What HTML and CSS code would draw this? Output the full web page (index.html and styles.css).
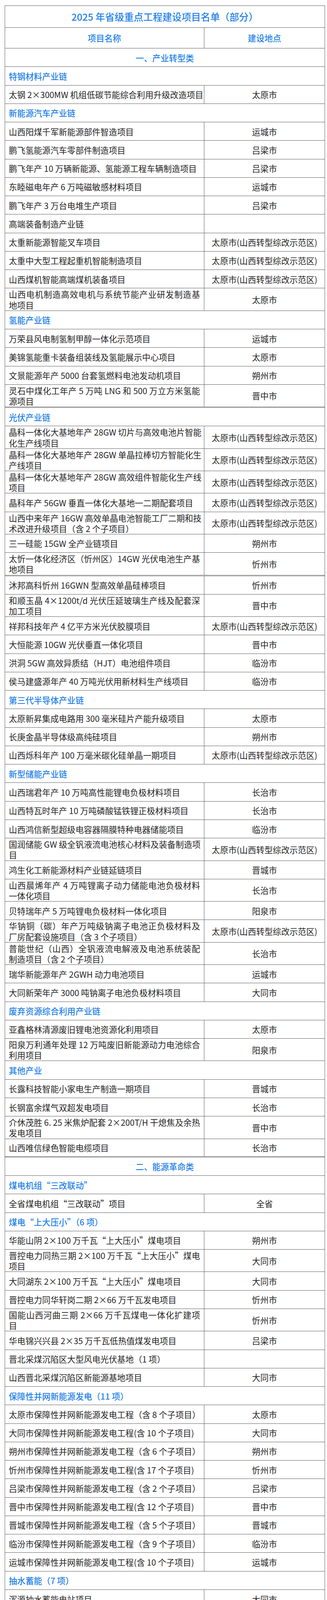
FILE: index.html
```html
<!DOCTYPE html>
<html lang="zh-CN">
<head>
<meta charset="utf-8">
<title>2025 年省级重点工程建设项目名单（部分）</title>
<link rel="stylesheet" href="styles.css">
</head>
<body>
<div class="page">
<div class="tbl">
<div class="row title"><div class="full">2025 年省级重点工程建设项目名单（部分）</div></div>
<div class="row head"><div class="nm">项目名称</div><div class="lc">建设地点</div></div>

<div class="row sec"><div class="full">一、产业转型类</div></div>
<div class="row sub"><div class="full">特钢材料产业链</div></div>
<div class="row"><div class="nm">太钢 2×300MW 机组低碳节能综合利用升级改造项目</div><div class="lc">太原市</div></div>
<div class="row sub"><div class="full">新能源汽车产业链</div></div>
<div class="row"><div class="nm">山西阳煤千军新能源部件智造项目</div><div class="lc">运城市</div></div>
<div class="row"><div class="nm">鹏飞氢能源汽车零部件制造项目</div><div class="lc">吕梁市</div></div>
<div class="row"><div class="nm">鹏飞年产 10 万辆新能源、氢能源工程车辆制造项目</div><div class="lc">吕梁市</div></div>
<div class="row"><div class="nm">东睦磁电年产 6 万吨磁敏感材料项目</div><div class="lc">运城市</div></div>
<div class="row"><div class="nm">鹏飞年产 3 万台电堆生产项目</div><div class="lc">吕梁市</div></div>
<div class="row"><div class="nm">高端装备制造产业链</div><div class="lc"></div></div>
<div class="row"><div class="nm">太重新能源智能叉车项目</div><div class="lc">太原市(山西转型综改示范区)</div></div>
<div class="row"><div class="nm">太重中大型工程起重机智能制造项目</div><div class="lc">太原市(山西转型综改示范区)</div></div>
<div class="row"><div class="nm">山西煤机智能高端煤机装备项目</div><div class="lc">太原市(山西转型综改示范区)</div></div>
<div class="row"><div class="nm"><p><span class="jl">山西电机制造高效电机与系统节能产业研发制造基</span>地项目</p></div><div class="lc">太原市</div></div>
<div class="row sub"><div class="full">氢能产业链</div></div>
<div class="row"><div class="nm">万荣县风电制氢制甲醇一体化示范项目</div><div class="lc">运城市</div></div>
<div class="row"><div class="nm">美锦氢能重卡装备组装线及氢能展示中心项目</div><div class="lc">太原市</div></div>
<div class="row"><div class="nm">文景能源年产 5000 台套氢燃料电池发动机项目</div><div class="lc">朔州市</div></div>
<div class="row dbl"><div class="nm"><p><span class="jl">灵石中煤化工年产 5 万吨 LNG 和 500 万立方米氢能</span>源项目</p></div><div class="lc">晋中市</div></div>
<div class="row sub"><div class="full">光伏产业链</div></div>
<div class="row"><div class="nm"><p><span class="jl">晶科一体化大基地年产 28GW 切片与高效电池片智能</span>化生产线项目</p></div><div class="lc">太原市(山西转型综改示范区)</div></div>
<div class="row"><div class="nm"><p><span class="jl">晶科一体化大基地年产 28GW 单晶拉棒切方智能化生</span>产线项目</p></div><div class="lc">太原市(山西转型综改示范区)</div></div>
<div class="row"><div class="nm"><p><span class="jl">晶科一体化大基地年产 28GW 高效组件智能化生产线</span>项目</p></div><div class="lc">太原市(山西转型综改示范区)</div></div>
<div class="row"><div class="nm">晶科年产 56GW 垂直一体化大基地一二期配套项目</div><div class="lc">太原市(山西转型综改示范区)</div></div>
<div class="row"><div class="nm"><p><span class="jl">山西中来年产 16GW 高效单晶电池智能工厂二期和技</span>术改进升级项目（含 2 个子项目）</p></div><div class="lc">太原市(山西转型综改示范区)</div></div>
<div class="row"><div class="nm">三一硅能 15GW 全产业链项目</div><div class="lc">朔州市</div></div>
<div class="row dbl"><div class="nm"><p><span class="jl">太忻一体化经济区（忻州区）14GW 光伏电池生产基</span>地项目</p></div><div class="lc">忻州市</div></div>
<div class="row"><div class="nm">沐邦高科忻州 16GWN 型高效单晶硅棒项目</div><div class="lc">忻州市</div></div>
<div class="row"><div class="nm"><p><span class="jl">和顺玉晶 4×1200t/d 光伏压延玻璃生产线及配套深</span>加工项目</p></div><div class="lc">晋中市</div></div>
<div class="row"><div class="nm">祥邦科技年产 4 亿平方米光伏胶膜项目</div><div class="lc">太原市(山西转型综改示范区)</div></div>
<div class="row"><div class="nm">大恒能源 10GW 光伏垂直一体化项目</div><div class="lc">晋中市</div></div>
<div class="row"><div class="nm">洪洞 5GW 高效异质结（HJT）电池组件项目</div><div class="lc">临汾市</div></div>
<div class="row"><div class="nm">侯马建盛源年产 40 万吨光伏用新材料生产线项目</div><div class="lc">临汾市</div></div>
<div class="row sub"><div class="full">第三代半导体产业链</div></div>
<div class="row"><div class="nm">太原新昇集成电路用 300 毫米硅片产能升级项目</div><div class="lc">太原市</div></div>
<div class="row"><div class="nm">长庚金晶半导体级高纯硅项目</div><div class="lc">朔州市</div></div>
<div class="row"><div class="nm">山西烁科年产 100 万毫米碳化硅单晶一期项目</div><div class="lc">太原市(山西转型综改示范区)</div></div>
<div class="row sub"><div class="full">新型储能产业链</div></div>
<div class="row"><div class="nm">山西瑞君年产 10 万吨高性能锂电负极材料项目</div><div class="lc">长治市</div></div>
<div class="row"><div class="nm">山西特瓦时年产 10 万吨磷酸锰铁锂正极材料项目</div><div class="lc">长治市</div></div>
<div class="row"><div class="nm">山西鸿信新型超级电容器隔膜特种电器储能项目</div><div class="lc">临汾市</div></div>
<div class="row"><div class="nm"><p><span class="jl">国润储能 GW 级全钒液流电池核心材料及装备制造项</span>目</p></div><div class="lc">太原市(山西转型综改示范区)</div></div>
<div class="row"><div class="nm">鸿生化工新能源材料产业链延链项目</div><div class="lc">晋城市</div></div>
<div class="row"><div class="nm"><p><span class="jl">山西晨烯年产 4 万吨锂离子动力储能电池负极材料</span>一体化项目</p></div><div class="lc">长治市</div></div>
<div class="row"><div class="nm">贝特瑞年产 5 万吨锂电负极材料一体化项目</div><div class="lc">阳泉市</div></div>
<div class="row"><div class="nm"><p><span class="jl">华钠铜（碳）年产万吨级钠离子电池正负极材料及</span>厂房配套设施项目（含 3 个子项目）</p></div><div class="lc">太原市(山西转型综改示范区)</div></div>
<div class="row"><div class="nm"><p><span class="jl">普能世纪（山西）全钒液流电解液及电池系统装配</span>制造项目（含 2 个子项目）</p></div><div class="lc">长治市</div></div>
<div class="row"><div class="nm">瑞华新能源年产 2GWH 动力电池项目</div><div class="lc">运城市</div></div>
<div class="row"><div class="nm">大同新荣年产 3000 吨钠离子电池负极材料项目</div><div class="lc">大同市</div></div>
<div class="row sub"><div class="full">废弃资源综合利用产业链</div></div>
<div class="row"><div class="nm">亚鑫格林清源废旧锂电池资源化利用项目</div><div class="lc">太原市</div></div>
<div class="row"><div class="nm"><p><span class="jl">阳泉万利通年处理 12 万吨废旧新能源动力电池综合</span>利用项目</p></div><div class="lc">阳泉市</div></div>
<div class="row sub"><div class="full">其他产业</div></div>
<div class="row"><div class="nm">长露科技智能小家电生产制造一期项目</div><div class="lc">晋城市</div></div>
<div class="row"><div class="nm">长钢富余煤气双超发电项目</div><div class="lc">长治市</div></div>
<div class="row"><div class="nm"><p><span class="jl">介休茂胜 6. 25 米焦炉配套 2×200T/H 干熄焦及余热</span>发电项目</p></div><div class="lc">晋中市</div></div>
<div class="row dbl"><div class="nm">山西唯信绿色智能电缆项目</div><div class="lc">长治市</div></div>

<div class="row sec"><div class="full">二、能源革命类</div></div>
<div class="row sub"><div class="full">煤电机组“三改联动”</div></div>
<div class="row"><div class="nm">全省煤电机组“三改联动”项目</div><div class="lc">全省</div></div>
<div class="row sub"><div class="full">煤电“上大压小”（6 项）</div></div>
<div class="row"><div class="nm">华能山阴 2×100 万千瓦“上大压小”煤电项目</div><div class="lc">朔州市</div></div>
<div class="row"><div class="nm"><p><span class="jl">晋控电力同热三期 2×100 万千瓦“上大压小”煤电</span>项目</p></div><div class="lc">大同市</div></div>
<div class="row"><div class="nm">大同湖东 2×100 万千瓦“上大压小”煤电项目</div><div class="lc">大同市</div></div>
<div class="row"><div class="nm">晋控电力同华轩岗二期 2×66 万千瓦发电项目</div><div class="lc">忻州市</div></div>
<div class="row"><div class="nm"><p><span class="jl">国能山西河曲三期 2×66 万千瓦煤电一体化扩建项</span>目</p></div><div class="lc">忻州市</div></div>
<div class="row"><div class="nm">华电锦兴兴县 2×35 万千瓦低热值煤发电项目</div><div class="lc">吕梁市</div></div>
<div class="row"><div class="nm">晋北采煤沉陷区大型风电光伏基地（1 项）</div><div class="lc"></div></div>
<div class="row"><div class="nm">山西晋北采煤沉陷区新能源基地项目</div><div class="lc">大同市</div></div>
<div class="row sub"><div class="full">保障性并网新能源发电（11 项）</div></div>
<div class="row"><div class="nm">太原市保障性并网新能源发电工程（含 8 个子项目）</div><div class="lc">太原市</div></div>
<div class="row"><div class="nm">大同市保障性并网新能源发电工程(含 10 个子项目)</div><div class="lc">大同市</div></div>
<div class="row"><div class="nm">朔州市保障性并网新能源发电工程（含 6 个子项目）</div><div class="lc">朔州市</div></div>
<div class="row"><div class="nm">忻州市保障性并网新能源发电工程(含 17 个子项目)</div><div class="lc">忻州市</div></div>
<div class="row"><div class="nm">吕梁市保障性并网新能源发电工程（含 2 个子项目）</div><div class="lc">吕梁市</div></div>
<div class="row"><div class="nm">晋中市保障性并网新能源发电工程(含 12 个子项目)</div><div class="lc">晋中市</div></div>
<div class="row"><div class="nm">晋城市保障性并网新能源发电工程（含 5 个子项目）</div><div class="lc">晋城市</div></div>
<div class="row"><div class="nm">临汾市保障性并网新能源发电工程（含 9 个子项目）</div><div class="lc">临汾市</div></div>
<div class="row"><div class="nm">运城市保障性并网新能源发电工程(含 10 个子项目)</div><div class="lc">运城市</div></div>
<div class="row sub"><div class="full">抽水蓄能（7 项）</div></div>
<div class="row"><div class="nm">浑源抽水蓄能电站项目</div><div class="lc">大同市</div></div>
<div class="row"><div class="nm">垣曲抽水蓄能电站项目</div><div class="lc">运城市</div></div>
<div class="row"><div class="nm">垣曲抽水蓄能电站二期项目</div><div class="lc">运城市</div></div>
<div class="row"><div class="nm">代县黄草院抽水蓄能电站项目</div><div class="lc">忻州市</div></div>
<div class="row"><div class="nm">盂县上社抽水蓄能电站项目</div><div class="lc">阳泉市</div></div>
<div class="row"><div class="nm">绛县抽水蓄能电站项目</div><div class="lc">运城市</div></div>
<div class="row"><div class="nm">华电蒲县抽水蓄能电站项目</div><div class="lc">临汾市</div></div>
<div class="row sub dbl"><div class="full">新型储能（7 项）</div></div>
<div class="row"><div class="nm">潞城仁和 300MW/600MWh 独立储能项目</div><div class="lc">长治市</div></div>
<div class="row"><div class="nm">平定 400MW/800MWh 储能电站项目</div><div class="lc">阳泉市</div></div>
<div class="row"><div class="nm">阳泉郊区 500MW/1000MWh 独立储能项目</div><div class="lc">阳泉市</div></div>
<div class="row"><div class="nm">翼城 100MW/50. 43MWh 独立混合调频储能电站项目</div><div class="lc">临汾市</div></div>
<div class="row"><div class="nm">晋中元工 200MW/200MWh 独立储能项目</div><div class="lc">晋中市</div></div>
<div class="row"><div class="nm">中能国域 100MW/50. 41MWh 独立储能项目</div><div class="lc">运城市</div></div>
<div class="row"><div class="nm">中储能 100MW/100. 43MWh 独立混合储能项目</div><div class="lc">大同市</div></div>
<div class="row sub"><div class="full">晋电外送通道（2 项）</div></div>
<div class="row"><div class="nm">陇东—山东特高压直流输电山西段工程</div><div class="lc">临汾市、长治市</div></div>
<div class="row"><div class="nm">大同—天津南特高压交流输电山西段工程</div><div class="lc">大同市</div></div>
<div class="row sub"><div class="full">新能源汇集站及电铁配套（1 项）</div></div>
<div class="row"><div class="nm">重点地区汇集站和输变电工程（含 14 个子项目）</div><div class="lc"><p>晋中市、运城市、朔州市、大同市、吕梁市、太原市、忻州市</p></div></div>

<div class="row sec"><div class="full">三、科教人才类</div></div>
<div class="row"><div class="nm">晋创谷太原—新能源智慧产业园基础设施建设项目</div><div class="lc">太原市</div></div>
<div class="row"><div class="nm"><p><span class="jl">晋创谷太原—先进装备智造产业园基础设施建设项</span>目</p></div><div class="lc">太原市</div></div>
<div class="row"><div class="nm"><p><span class="jl">晋创谷大同—大同经开区电力电子元器件产品制造</span>基地厂房改建项目</p></div><div class="lc">大同市</div></div>
<div class="row"><div class="nm"><p><span class="jl">晋创谷大同—盘毂动力年产 1000 台套轴向磁通电驱</span>动系统总成项目</p></div><div class="lc">大同市</div></div>
<div class="row"><div class="nm"><p><span class="jl">晋创谷晋中—赛盈储能 300MW 全钒液流电池生产项</span>目</p></div><div class="lc">晋中市</div></div>
</div>
</div>
</body>
</html>
```

FILE: styles.css
```css
html, body {
  margin: 0;
  padding: 0;
  background: #ffffff;
}

.page {
  padding: 14px 5px 0 12px;
  font-family: "Noto Sans CJK SC", "Noto Sans", sans-serif;
  font-size: 21.33px;
  line-height: 27.15px;
  color: #262626;
}

.tbl {
  width: 820px;
  box-sizing: border-box;
  border: 1px solid #5e5e5e;
  border-bottom: none;
}

.row {
  display: grid;
  grid-template-columns: 510px 1fr;
  min-height: 47.28px;
  box-sizing: border-box;
  border-bottom: 1px solid #5e5e5e;
}

.row.dbl {
  border-bottom: 3px double #5e5e5e;
}

.row > div {
  display: flex;
  align-items: center;
  min-width: 0;
  padding-top: 1px;
  padding-bottom: 1px;
}

.row p {
  margin: 0;
  width: 100%;
}

.nm {
  padding-left: 9.5px;
  padding-right: 10px;
  border-right: 1px solid #5e5e5e;
  white-space: nowrap;
  text-align: left;
}

.lc {
  padding-left: 10px;
  padding-right: 10px;
  justify-content: center;
  text-align: center;
}

.full {
  grid-column: 1 / 3;
  padding-left: 9.5px;
  padding-right: 10px;
}

.title {
  min-height: 56px;
}

.title .full {
  justify-content: center;
  color: #1f80ea;
  font-size: 24.5px;
  font-weight: 500;
}

.head {
  min-height: 53px;
}

.head .nm,
.head .lc {
  justify-content: center;
  color: #1f80ea;
  font-weight: 500;
}

.sec .full {
  justify-content: center;
  color: #1f80ea;
  font-weight: 500;
}

.sub .full {
  color: #1f80ea;
  font-weight: 500;
}

.jl {
  display: block;
  text-align: justify;
  text-align-last: justify;
}
```
